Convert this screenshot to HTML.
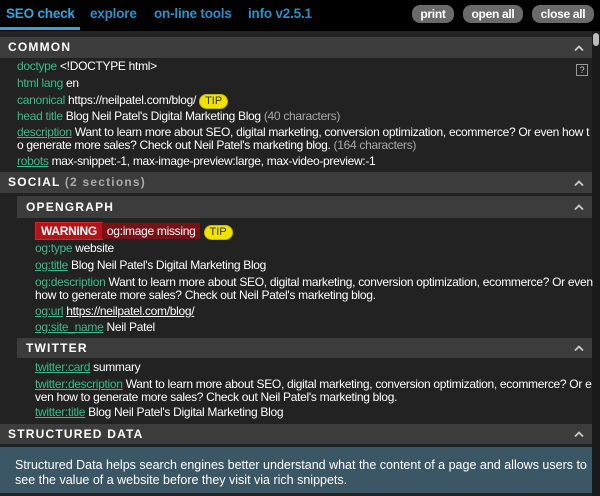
<!DOCTYPE html>
<html><head><style>
*{margin:0;padding:0;box-sizing:border-box}
body{width:600px;height:496px;background:#000;font-family:"Liberation Sans",Arial,sans-serif;font-size:12px;letter-spacing:-0.3px;color:#fff;position:relative;overflow:hidden}
.nav{position:absolute;top:0;left:0;width:600px;height:31px;background:#000}
.nav a{position:absolute;top:6px;font-weight:bold;font-size:13.5px;letter-spacing:-0.2px;color:#2d8fc4}
.btn{position:absolute;top:5px;height:18px;border-radius:8px;background:#6a6a6a;color:#fff;font-weight:bold;font-size:12px;text-align:center;line-height:18px}
.main{position:absolute;top:31px;left:0;width:592px;height:465px;background:#222}
.sb{position:absolute;top:31px;left:592px;width:8px;height:465px;background:#1a1a1a}
.sb div{position:absolute;left:1px;top:2px;width:6px;height:13px;border-radius:3px;background:#bbb}
.h{position:absolute;left:0;width:592px;background:#3c3c3c;font-weight:bold;letter-spacing:1.2px;font-size:12px;color:#fff;padding-left:8px}
.h span{color:#aaa}
.car{position:absolute;right:8px;top:50%;margin-top:-3px}
.r{position:absolute;left:17px;white-space:nowrap;line-height:13px}
.g{color:#3dbb8a}
.u{text-decoration:underline}
.gr{color:#aaa}
.tip{display:inline-block;background:#f2e200;color:#333;border-radius:8px;padding:0 5px;font-size:11px;line-height:13px;border:1px solid #c9b800;letter-spacing:0}
</style></head><body>
<div class="nav">
<a style="left:6px;color:#2fa6e0">SEO check</a>
<div style="position:absolute;left:0;top:27px;width:80px;height:3px;background:#2fa6e0"></div>
<a style="left:90px">explore</a>
<a style="left:154px">on-line tools</a>
<a style="left:248px">info v2.5.1</a>
<div class="btn" style="left:412px;width:42px">print</div>
<div class="btn" style="left:463px;width:60px">open all</div>
<div class="btn" style="left:532px;width:62px">close all</div>
</div>
<div class="main"></div>
<div class="sb"><div></div></div>
<svg width="0" height="0" style="position:absolute"><defs><symbol id="c" viewBox="0 0 10 6"><path d="M1 5.5L5 1.5L9 5.5" fill="none" stroke="#ccc" stroke-width="1.8"/></symbol></defs></svg>
<div class="h" style="top:37px;height:21px;line-height:21px">COMMON<svg class="car" width="10" height="6"><use href="#c"/></svg></div>
<div style="position:absolute;left:576px;top:64px;width:12px;height:12px;border:1px solid #999;color:#ccc;font-size:9px;text-align:center;line-height:10px">?</div>
<div class="r" style="top:60px"><span class="g">doctype</span> &lt;!DOCTYPE html&gt;</div>
<div class="r" style="top:77px"><span class="g">html lang</span> en</div>
<div class="r" style="top:94px"><span class="g">canonical</span> https://neilpatel.com/blog/ <span class="tip">TIP</span></div>
<div class="r" style="top:110px"><span class="g">head title</span> Blog Neil Patel's Digital Marketing Blog <span class="gr">(40 characters)</span></div>
<div class="r" style="top:126px"><span class="g u">description</span> Want to learn more about SEO, digital marketing, conversion optimization, ecommerce? Or even how t<br>o generate more sales? Check out Neil Patel's marketing blog. <span class="gr">(164 characters)</span></div>
<div class="r" style="top:155px"><span class="g u">robots</span> max-snippet:-1, max-image-preview:large, max-video-preview:-1</div>
<div class="h" style="top:172px;height:21px;line-height:21px">SOCIAL <span>(2 sections)</span><svg class="car" width="10" height="6"><use href="#c"/></svg></div>
<div class="h" style="top:196px;left:17px;width:575px;height:22px;line-height:22px;padding-left:9px">OPENGRAPH<svg class="car" width="10" height="6"><use href="#c"/></svg></div>
<div class="r" style="top:222px;left:35px;line-height:16px"><span style="display:inline-block;background:#b0151c;padding:0 5px;font-weight:bold;font-size:12px;border:1px solid #d22">WARNING</span><span style="display:inline-block;background:#7a1116;padding:0 5px;margin-left:-1px">og:image missing</span> <span class="tip">TIP</span></div>
<div class="r" style="top:242px;left:35px"><span class="g">og:type</span> website</div>
<div class="r" style="top:259px;left:35px"><span class="g u">og:title</span> Blog Neil Patel's Digital Marketing Blog</div>
<div class="r" style="top:276px;left:35px"><span class="g">og:description</span> Want to learn more about SEO, digital marketing, conversion optimization, ecommerce? Or even<br>how to generate more sales? Check out Neil Patel's marketing blog.</div>
<div class="r" style="top:305px;left:35px"><span class="g u">og:url</span> <span class="u">https://neilpatel.com/blog/</span></div>
<div class="r" style="top:321px;left:35px"><span class="g u">og:site_name</span> Neil Patel</div>
<div class="h" style="top:338px;left:17px;width:575px;height:20px;line-height:20px;padding-left:9px">TWITTER<svg class="car" width="10" height="6"><use href="#c"/></svg></div>
<div class="r" style="top:361px;left:35px"><span class="g u">twitter:card</span> summary</div>
<div class="r" style="top:378px;left:35px"><span class="g u">twitter:description</span> Want to learn more about SEO, digital marketing, conversion optimization, ecommerce? Or e<br>ven how to generate more sales? Check out Neil Patel's marketing blog.</div>
<div class="r" style="top:406px;left:35px"><span class="g u">twitter:title</span> Blog Neil Patel's Digital Marketing Blog</div>
<div class="h" style="top:424px;height:20px;line-height:20px">STRUCTURED DATA<svg class="car" width="10" height="6"><use href="#c"/></svg></div>
<div style="position:absolute;top:447px;left:0;width:592px;height:46px;background:#3b5766;padding:11px 0 0 15px;font-size:12.5px;letter-spacing:0;line-height:15px;color:#fff">Structured Data helps search engines better understand what the content of a page and allows users to<br>see the value of a website before they visit via rich snippets.</div>
</body></html>
